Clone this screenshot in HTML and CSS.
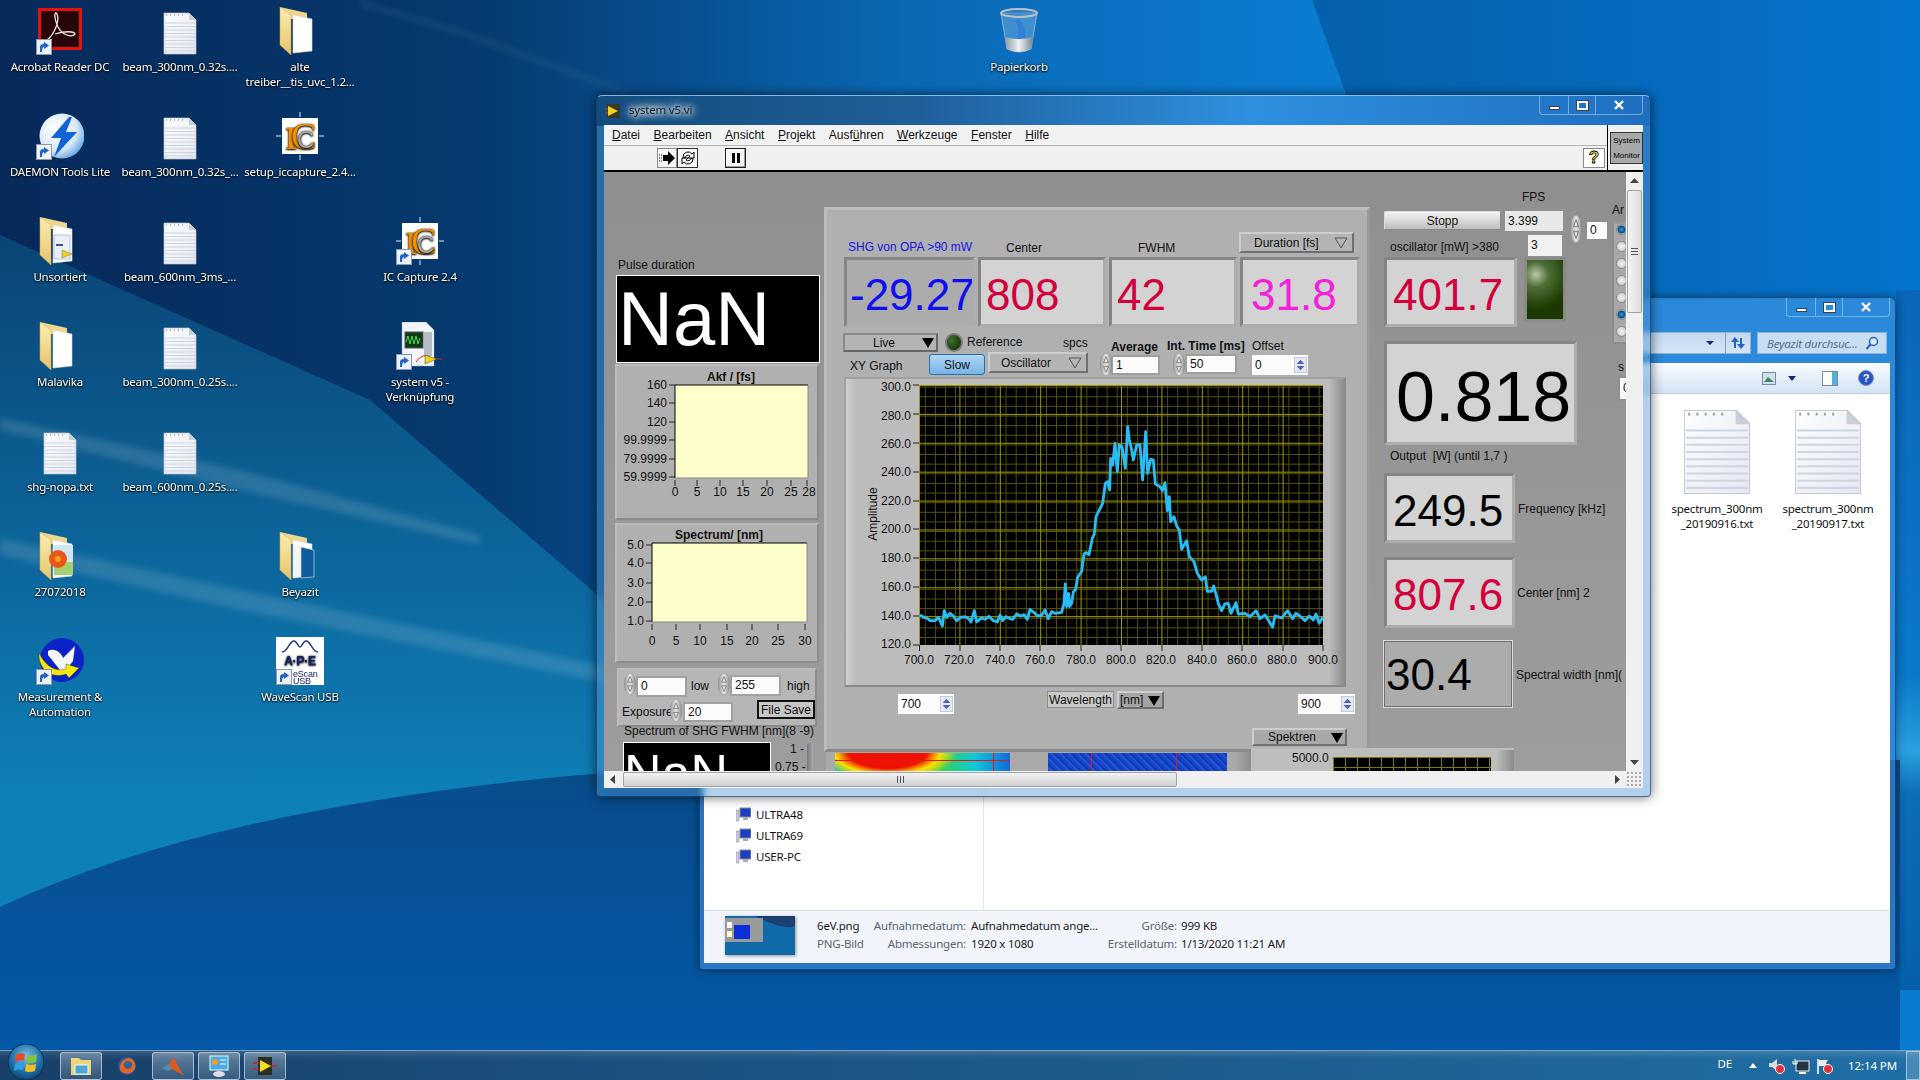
FILE: index.html
```html
<!DOCTYPE html>
<html lang="de">

<head>
    <meta charset="UTF-8">
    <title>system v5.vi</title>
    <link rel="stylesheet" href="styles.css">
</head>

<body>
    <svg class="defs" width="0" height="0">
        <defs>
            <linearGradient id="folderY" x1="0" y1="0" x2="0" y2="1">
                <stop offset="0" stop-color="#fbeeb0" />
                <stop offset="1" stop-color="#e6c46a" />
            </linearGradient>
            <linearGradient id="pageG" x1="0" y1="0" x2="1" y2="1">
                <stop offset="0" stop-color="#fdfdfe" />
                <stop offset="1" stop-color="#e4e8f0" />
            </linearGradient>
            <radialGradient id="orbG" cx=".5" cy=".35" r=".7">
                <stop offset="0" stop-color="#7fc4ea" />
                <stop offset=".6" stop-color="#1c6fa8" />
                <stop offset="1" stop-color="#0d3f6a" />
            </radialGradient>
            <radialGradient id="daemonG" cx=".35" cy=".35" r=".8">
                <stop offset="0" stop-color="#ffffff" />
                <stop offset=".6" stop-color="#d6e8f6" />
                <stop offset="1" stop-color="#3c8fe0" />
            </radialGradient>
            <linearGradient id="spinG" x1="0" y1="0" x2="1" y2="0">
                <stop offset="0" stop-color="#9a9a9a" />
                <stop offset=".5" stop-color="#e6e6e6" />
                <stop offset="1" stop-color="#8e8e8e" />
            </linearGradient>
            <linearGradient id="binG" x1="0" y1="0" x2="1" y2="0">
                <stop offset="0" stop-color="#8d9aa4" />
                <stop offset=".5" stop-color="#eef2f4" />
                <stop offset="1" stop-color="#78848c" />
            </linearGradient>
            <linearGradient id="wallTop" x1="0" y1="0" x2="1" y2="0">
                <stop offset="0" stop-color="#07295a" />
                <stop offset=".25" stop-color="#063a70" />
                <stop offset=".47" stop-color="#0a68b4" />
                <stop offset=".68" stop-color="#0b7bd0" />
                <stop offset="1" stop-color="#0b7bd0" />
            </linearGradient>
            <linearGradient id="wallRight" x1="0" y1="0" x2="1" y2="0">
                <stop offset="0" stop-color="#0560ac" />
                <stop offset="1" stop-color="#0574cc" />
            </linearGradient>
            <linearGradient id="wallMid" gradientUnits="userSpaceOnUse" x1="0" y1="235" x2="0" y2="800">
                <stop offset="0" stop-color="#0a4476" />
                <stop offset="1" stop-color="#0e80b8" />
            </linearGradient>
            <linearGradient id="wallLow" gradientUnits="userSpaceOnUse" x1="0" y1="770" x2="0" y2="1050">
                <stop offset="0" stop-color="#084c8a" />
                <stop offset="1" stop-color="#0558a8" />
            </linearGradient>
            <linearGradient id="wallEdge" x1="0" y1="0" x2="0" y2="1">
                <stop offset="0" stop-color="#0a66b8" />
                <stop offset=".55" stop-color="#0a78c8" />
                <stop offset=".66" stop-color="#2aa0e0" />
                <stop offset=".72" stop-color="#0b6cb8" />
                <stop offset="1" stop-color="#0560ac" />
            </linearGradient>
            <pattern id="gridMinor" width="10.1" height="9.63" patternUnits="userSpaceOnUse">
                <path d="M.5 0V9.63M0 .5H10.1" stroke="#57530a" fill="none" shape-rendering="crispEdges" />
            </pattern>
            <pattern id="gridMajor" width="40.4" height="28.89" patternUnits="userSpaceOnUse">
                <path d="M.5 0V28.89M0 .5H40.4" stroke="#a09c00" fill="none" shape-rendering="crispEdges" />
            </pattern>
            <symbol id="doc" viewBox="0 0 48 48">
                <path d="M8 6H33L40 13V47H8Z" fill="url(#pageG)" stroke="#b7bcc6" stroke-width=".7" />
                <path d="M33 6V13H40Z" fill="#c9ced8" />
                <path d="M10 8h1M14 8h1M18 8h1M22 8h1M26 8h1" stroke="#9aa0aa" stroke-width="1.4" />
                <path d="M9 16H39M9 19.5H39M9 23H39M9 26.5H39M9 30H39M9 33.5H39M9 37H39M9 40.5H39M9 44H39" stroke="#ccd5e2" />
            </symbol>
            <symbol id="folder" viewBox="0 0 48 48">
                <path d="M4 0L31 6V12H15Z" fill="#eed68c" />
                <path d="M17 8L36 12V44L17 46Z" fill="#fff" stroke="#d5d8de" stroke-width=".6" />
                <path d="M4 0L15 8V48L4 38Z" fill="url(#folderY)" stroke="#cfae5c" stroke-width=".5" />
            </symbol>
            <symbol id="shortcut" viewBox="0 0 16 16">
                <rect x=".5" y=".5" width="15" height="15" fill="#eef2f8" stroke="#8d99a8" />
                <path d="M4 13V8Q4 5 8 5V3L13 6.5 8 10V8Q6 8 6 13Z" fill="#1f63c4" />
            </symbol>
            <symbol id="ic" viewBox="0 0 48 48">
                <path d="M24 0V5M24 43V48M0 24H5M43 24H48" stroke="#8fb0cc" stroke-width="1.5" />
                <rect x="6" y="6" width="36" height="36" fill="#fff" />
                <text x="9" y="37" class="ic-i">I</text>
                <text x="15" y="37" class="ic-c">C</text>
                <text x="21" y="36" class="ic-c2">C</text>
            </symbol>
            <symbol id="spin" viewBox="0 0 12 24" preserveAspectRatio="none">
                <ellipse cx="6" cy="12" rx="5.8" ry="11.8" fill="url(#spinG)" stroke="#8a8a8a" stroke-width=".5" />
                <path d="M3.5 10L6 4 8.5 10ZM3.5 14L6 20 8.5 14Z" fill="none" stroke="#666" stroke-width=".7" />
            </symbol>
            <symbol id="ddopen" viewBox="0 0 14 12">
                <path d="M1 1H13L7 11Z" fill="none" stroke="#555" />
            </symbol>
        </defs>
    </svg>

    <svg class="wallpaper" viewBox="0 0 1920 1080" preserveAspectRatio="none">
        <rect width="1920" height="1080" fill="url(#wallTop)" />
        <path d="M1312 0L1420 300H1920V0Z" fill="url(#wallRight)" />
        <rect x="1896" y="290" width="24" height="700" fill="url(#wallEdge)" />
        <path d="M0 235L370 400 720 700V920H0Z" fill="url(#wallMid)" />
        <path d="M0 907Q250 790 720 765L1900 760V1080H0Z" fill="url(#wallLow)" />
        <g class="streaks">
            <polygon points="0,418 240,470 480,535 480,545 240,490 0,430" fill="#fff" opacity=".13" />
            <polygon points="0,538 240,590 480,640 720,690 720,705 240,610 0,555" fill="#fff" opacity=".13" />
            <polygon points="460,30 632,93 628,95 460,34" fill="#fff" opacity=".1" />
            <polygon points="360,0 460,28 460,36 360,6" fill="#fff" opacity=".06" />
        </g>
    </svg>

    <!-- desktop icons, filled column by column -->
    <div class="desktop">
        <div class="icon"><svg class="glyph" viewBox="0 0 48 48"><rect x="3.5" y="2.5" width="41" height="39" fill="#260606" stroke="#e8120c" stroke-width="3" /><path d="M11 33C18 28 24 14 21 7 19 3 17 9 22 20 26 28 36 31 39 27 39 24 28 24 19 27" fill="none" stroke="#f0e6e6" stroke-width="1.3" /><use href="#shortcut" x="0" y="32" width="16" height="16" /></svg><span>Acrobat Reader DC</span></div>
        <div class="icon"><svg class="glyph" viewBox="0 0 48 48"><circle cx="26" cy="24" r="22.5" fill="url(#daemonG)" /><path d="M33 5L15 26H25L18 45 41 20H30L36 5Z" fill="#1463d6" /><use href="#shortcut" x="0" y="32" width="16" height="16" /></svg><span>DAEMON Tools Lite</span></div>
        <div class="icon"><svg class="glyph" viewBox="0 0 48 48"><use href="#folder" /><rect x="18" y="18" width="16" height="24" fill="#eaf0f8" stroke="#8aa0c0" stroke-width=".6" /><path d="M20 28h7" stroke="#3a4fa0" stroke-width="2" /><path d="M26 33L36 37 26 41Z" fill="#f2d21c" stroke="#555" stroke-width=".4" /></svg><span>Unsortiert</span></div>
        <div class="icon"><svg class="glyph" viewBox="0 0 48 48"><use href="#folder" /></svg><span>Malavika</span></div>
        <div class="icon"><svg class="glyph" viewBox="0 0 48 48"><use href="#doc" /></svg><span>shg-nopa.txt</span></div>
        <div class="icon"><svg class="glyph" viewBox="0 0 48 48"><use href="#folder" /><rect x="18" y="13" width="19" height="30" fill="#a8d070" /><rect x="18" y="13" width="19" height="17" fill="#cfe6f5" /><circle cx="22" cy="27" r="9" fill="#e8561a" /><circle cx="22" cy="27" r="3" fill="#f4a020" /></svg><span>27072018</span></div>
        <div class="icon"><svg class="glyph" viewBox="0 0 48 48"><circle cx="26" cy="23" r="22" fill="#0a22c8" /><path d="M12 14C18 10 26 16 27 21L39 9 37 24 30 33H24L12 18Z" fill="#f4f6ff" /><path d="M3 16C2 34 18 42 30 37L33 41 43 31 30 27V32C20 35 10 30 3 16Z" fill="#f4e80c" stroke="#3a3a00" stroke-width=".4" /><use href="#shortcut" x="0" y="32" width="16" height="16" /></svg><span>Measurement &amp;<br>Automation</span></div>

        <div class="icon"><svg class="glyph" viewBox="0 0 48 48"><use href="#doc" /></svg><span>beam_300nm_0.32s....</span></div>
        <div class="icon"><svg class="glyph" viewBox="0 0 48 48"><use href="#doc" /></svg><span>beam_300nm_0.32s_...</span></div>
        <div class="icon"><svg class="glyph" viewBox="0 0 48 48"><use href="#doc" /></svg><span>beam_600nm_3ms_...</span></div>
        <div class="icon"><svg class="glyph" viewBox="0 0 48 48"><use href="#doc" /></svg><span>beam_300nm_0.25s....</span></div>
        <div class="icon"><svg class="glyph" viewBox="0 0 48 48"><use href="#doc" /></svg><span>beam_600nm_0.25s....</span></div>
        <div></div>
        <div></div>

        <div class="icon"><svg class="glyph" viewBox="0 0 48 48"><use href="#folder" /></svg><span>alte<br>treiber__tis_uvc_1.2...</span></div>
        <div class="icon"><svg class="glyph" viewBox="0 0 48 48"><use href="#ic" /></svg><span>setup_iccapture_2.4...</span></div>
        <div></div>
        <div></div>
        <div></div>
        <div class="icon"><svg class="glyph" viewBox="0 0 48 48"><use href="#folder" /><rect x="17" y="14" width="11" height="30" fill="#f4f4f4" /><path d="M25 15L38 18V45L25 46Z" fill="#0f5c9c" stroke="#d8e4ee" stroke-width=".6" /></svg><span>Beyazit</span></div>
        <div class="icon"><svg class="glyph" viewBox="0 0 48 48"><rect width="48" height="48" fill="#fff" /><path d="M6 15C12 15 13 4 18 4 21 4 22 10 24 10 26 10 27 4 30 4 35 4 36 15 42 15" fill="none" stroke="#1d3a7a" stroke-width="1.5" /><text x="24" y="28" class="ape">A·P·E</text><text x="17" y="40" class="ape-sub">eScan</text><text x="17" y="47" class="ape-sub">USB</text><use href="#shortcut" x="0" y="32" width="16" height="16" /></svg><span>WaveScan USB</span></div>

        <div></div>
        <div></div>
        <div class="icon"><svg class="glyph" viewBox="0 0 48 48"><use href="#ic" /><use href="#shortcut" x="0" y="32" width="16" height="16" /></svg><span>IC Capture 2.4</span></div>
        <div class="icon"><svg class="glyph" viewBox="0 0 48 48"><path d="M6 0H30L38 8V44H6Z" fill="#f2f5fa" stroke="#9ab" stroke-width=".5" /><rect x="9" y="10" width="18" height="16" fill="#0c3a1c" stroke="#555" /><path d="M10 20l2-6 2 8 2-8 2 8 2-8 2 8 2-6" fill="none" stroke="#4fdc4f" /><rect x="28" y="10" width="8" height="24" fill="#b8bcc4" /><path d="M20 40Q26 30 36 36" stroke="#d03030" fill="none" /><path d="M29 33L41 37 29 42Z" fill="#f2d21c" stroke="#444" stroke-width=".5" /><path d="M41 37h5" stroke="#d03030" /><use href="#shortcut" x="0" y="32" width="16" height="16" /></svg><span>system v5 -<br>Verknüpfung</span></div>
    </div>

    <div class="icon recycle"><svg class="glyph" viewBox="0 0 48 48"><path d="M6 6L12 42Q24 48 36 42L42 6Z" fill="#8fc4ec" fill-opacity=".4" stroke="#9fc0d8" stroke-width=".8" /><path d="M20 14Q26 22 22 32L30 32Q32 22 24 12Z" fill="#2c78d8" opacity=".7" /><path d="M10 30Q24 34 38 30L36 42Q24 48 12 42Z" fill="url(#binG)" /><ellipse cx="24" cy="6" rx="18" ry="4" fill="#3e86c6" fill-opacity=".5" stroke="#b8c0c8" stroke-width="2" /></svg><span>Papierkorb</span></div>

    <!-- explorer window behind -->
    <section class="win explorer">
        <div class="ex-title">
            <div class="wbtns">
                <div class="wb wb-min"><i></i></div>
                <div class="wb wb-max"><i></i></div>
                <div class="wb wb-close"><svg width="12" height="10" viewBox="0 0 12 10"><path d="M2 1L10 9M10 1L2 9" stroke="#fff" stroke-width="2.4" /></svg></div>
            </div>
        </div>
        <div class="ex-addr">
            <div class="addr-box">
                <svg class="addr-drop" width="10" height="6" viewBox="0 0 10 6"><path d="M1 1H9L5 5Z" fill="#12287c" /></svg>
                <div class="addr-go"><svg width="16" height="16" viewBox="0 0 16 16"><path d="M5 2L1 7H4V13H6V7H9ZM11 14L15 9H12V3H10V9H7Z" fill="#1f63c4" /></svg></div>
            </div>
            <div class="search"><span>Beyazit durchsuc...</span><svg width="14" height="14" viewBox="0 0 14 14"><circle cx="8.5" cy="5.5" r="4" fill="#d8ecfa" stroke="#1f63c4" stroke-width="1.5" /><path d="M5.5 8.5L1.5 13" stroke="#1f63c4" stroke-width="2" /></svg></div>
        </div>
        <div class="ex-tools">
            <svg width="14" height="13" viewBox="0 0 14 13"><rect x=".5" y=".5" width="13" height="12" fill="#cfe0ee" stroke="#7a8da0" /><path d="M2 10L6 5 12 10Z" fill="#3f8a5a" /></svg>
            <svg class="tools-drop" width="8" height="5" viewBox="0 0 8 5"><path d="M0 0H8L4 5Z" fill="#12287c" /></svg>
            <svg class="tools-pane" width="16" height="15" viewBox="0 0 16 15"><rect x=".5" y=".5" width="15" height="14" fill="#fff" stroke="#7a8da0" /><rect x="10" y="1" width="5" height="13" fill="#53b0d8" /></svg>
            <svg class="tools-help" width="16" height="16" viewBox="0 0 16 16"><circle cx="8" cy="8" r="7.5" fill="#2a55c8" stroke="#8094c0" /><text x="8" y="12" class="help-q">?</text></svg>
        </div>
        <div class="ex-body">
            <nav class="ex-nav">
                <div class="net"><svg width="15" height="15" viewBox="0 0 15 15"><rect x="4" y="1" width="11" height="9" fill="#1a3fc0" stroke="#889" /><rect x="7" y="10" width="5" height="3" fill="#aab" /><rect x="0" y="3" width="3" height="11" fill="#ccd" stroke="#889" stroke-width=".5" /></svg>ULTRA48</div>
                <div class="net"><svg width="15" height="15" viewBox="0 0 15 15"><rect x="4" y="1" width="11" height="9" fill="#1a3fc0" stroke="#889" /><rect x="7" y="10" width="5" height="3" fill="#aab" /><rect x="0" y="3" width="3" height="11" fill="#ccd" stroke="#889" stroke-width=".5" /></svg>ULTRA69</div>
                <div class="net"><svg width="15" height="15" viewBox="0 0 15 15"><rect x="4" y="1" width="11" height="9" fill="#1a3fc0" stroke="#889" /><rect x="7" y="10" width="5" height="3" fill="#aab" /><rect x="0" y="3" width="3" height="11" fill="#ccd" stroke="#889" stroke-width=".5" /></svg>USER-PC</div>
            </nav>
            <div class="ex-files">
                <div class="file"><svg width="66" height="84" viewBox="8 6 32 41" preserveAspectRatio="none"><use href="#doc" width="48" height="48" /></svg><span>spectrum_300nm<br>_20190916.txt</span></div>
                <div class="file"><svg width="66" height="84" viewBox="8 6 32 41" preserveAspectRatio="none"><use href="#doc" width="48" height="48" /></svg><span>spectrum_300nm<br>_20190917.txt</span></div>
            </div>
        </div>
        <div class="ex-details">
            <svg class="thumb" width="70" height="39" viewBox="0 0 70 39"><rect width="70" height="39" fill="#0e6aa8" /><path d="M30 0Q60 15 70 10V0Z" fill="#1a3f70" /><rect x="0" y="2" width="38" height="24" fill="#9a9a9a" /><rect x="9" y="9" width="16" height="14" fill="#0a30d8" /><rect x="2" y="6" width="5" height="6" fill="#fff" /><rect x="2" y="15" width="5" height="6" fill="#ffc" /></svg>
            <div class="meta">
                <span class="m-name">6eV.png</span><span class="m-key">Aufnahmedatum:</span><span class="m-val">Aufnahmedatum ange...</span><span class="m-key">Größe:</span><span class="m-val2">999 KB</span>
                <span class="m-type">PNG-Bild</span><span class="m-key">Abmessungen:</span><span class="m-val">1920 x 1080</span><span class="m-key">Erstelldatum:</span><span class="m-val2">1/13/2020 11:21 AM</span>
            </div>
        </div>
    </section>

    <!-- labview window -->
    <section class="win labview">
        <div class="lv-title">
            <svg class="vi-icon" width="16" height="16" viewBox="0 0 16 16"><rect x="2" y="1" width="13" height="14" fill="#3a3a2a" /><path d="M3 3L13 8 3 13Z" fill="#f2d21c" /><path d="M0 6h3M0 10h3" stroke="#d03030" /></svg>
            <span class="lv-name">system v5.vi</span>
            <div class="wbtns">
                <div class="wb wb-min"><i></i></div>
                <div class="wb wb-max"><i></i></div>
                <div class="wb wb-close"><svg width="12" height="10" viewBox="0 0 12 10"><path d="M2 1L10 9M10 1L2 9" stroke="#fff" stroke-width="2.4" /></svg></div>
            </div>
        </div>
        <div class="client">
            <div class="bars">
                <div class="bars-main">
                    <div class="menu">
                        <span><u>D</u>atei</span><span><u>B</u>earbeiten</span><span><u>A</u>nsicht</span><span><u>P</u>rojekt</span><span>Ausf<u>ü</u>hren</span><span><u>W</u>erkzeuge</span><span><u>F</u>enster</span><span><u>H</u>ilfe</span>
                    </div>
                    <div class="tools">
                        <div class="tbtn tbtn-run"><svg width="16" height="14" viewBox="0 0 16 14"><path d="M0 4h1M0 7h1M0 10h1M2 4h1M2 7h1M2 10h1" stroke="#000" /><path d="M4 4H9V0L16 7 9 14V10H4Z" fill="#000" /></svg></div>
                        <div class="tbtn tbtn-loop"><svg width="16" height="16" viewBox="0 0 16 16"><path d="M3 7A5 5 0 0 1 12 4L14 2V8H8L10 6A3 3 0 0 0 5 8ZM13 9A5 5 0 0 1 4 12L2 14V8H8L6 10A3 3 0 0 0 11 8Z" fill="#fff" stroke="#000" /></svg></div>
                        <div class="tbtn tbtn-pause"><i></i><i></i></div>
                        <div class="tbtn tbtn-help"><span>?</span></div>
                    </div>
                </div>
                <div class="sysmon">
                    <div class="sysmon-box"><span>System</span><span>Monitor</span></div>
                </div>
            </div>
            <div class="lv-body">
                <div class="panel">
                    <span class="lbl l-pulse">Pulse duration</span>
                    <div class="nan nan-big">NaN</div>

                    <div class="cluster c-akf">
                        <svg width="204" height="156" class="chart">
                            <text x="116" y="17" class="ax ax-b" text-anchor="middle">Akf / [fs]</text>
                            <rect x="60" y="21" width="133" height="93" fill="#ffffcc" />
                            <path d="M60 114V21H193" fill="none" stroke="#000" />
                            <path d="M193 21V114H60" fill="none" stroke="#888" />
                            <path d="M54 21h6M54 39h6M54 58h6M54 76h6M54 95h6M54 113h6M60 116v6M82 116v6M105 116v6M128 116v6M152 116v6M176 116v6M192 116v6" stroke="#222" />
                            <g text-anchor="end" class="ax">
                                <text x="52" y="25">160</text>
                                <text x="52" y="43">140</text>
                                <text x="52" y="62">120</text>
                                <text x="52" y="80">99.9999</text>
                                <text x="52" y="99">79.9999</text>
                                <text x="52" y="117">59.9999</text>
                            </g>
                            <g text-anchor="middle" class="ax">
                                <text x="60" y="132">0</text>
                                <text x="82" y="132">5</text>
                                <text x="105" y="132">10</text>
                                <text x="128" y="132">15</text>
                                <text x="152" y="132">20</text>
                                <text x="176" y="132">25</text>
                                <text x="194" y="132">28</text>
                            </g>
                        </svg>
                    </div>

                    <div class="cluster c-spec">
                        <svg width="204" height="140" class="chart">
                            <text x="104" y="16" class="ax ax-b" text-anchor="middle">Spectrum/ [nm]</text>
                            <rect x="37" y="20" width="155" height="79" fill="#ffffcc" />
                            <path d="M37 99V20H192" fill="none" stroke="#000" />
                            <path d="M192 20V99H37" fill="none" stroke="#888" />
                            <path d="M31 22h6M31 40h6M31 60h6M31 79h6M31 98h6M37 101v6M61 101v6M85 101v6M112 101v6M137 101v6M163 101v6M190 101v6" stroke="#222" />
                            <g text-anchor="end" class="ax">
                                <text x="29" y="26">5.0</text>
                                <text x="29" y="44">4.0</text>
                                <text x="29" y="64">3.0</text>
                                <text x="29" y="83">2.0</text>
                                <text x="29" y="102">1.0</text>
                            </g>
                            <g text-anchor="middle" class="ax">
                                <text x="37" y="122">0</text>
                                <text x="61" y="122">5</text>
                                <text x="85" y="122">10</text>
                                <text x="112" y="122">15</text>
                                <text x="137" y="122">20</text>
                                <text x="163" y="122">25</text>
                                <text x="190" y="122">30</text>
                            </g>
                        </svg>
                    </div>

                    <div class="cluster c-ctrl"></div>
                    <svg class="spin sp-low"><use href="#spin" /></svg>
                    <div class="field f-low">0</div>
                    <span class="lbl l-low">low</span>
                    <svg class="spin sp-high"><use href="#spin" /></svg>
                    <div class="field f-high">255</div>
                    <span class="lbl l-high">high</span>
                    <span class="lbl l-exp">Exposure</span>
                    <svg class="spin sp-exp"><use href="#spin" /></svg>
                    <div class="field f-exp">20</div>
                    <div class="btn b-save">File Save</div>

                    <span class="lbl l-shg">Spectrum of SHG FWHM [nm](8 -9)</span>
                    <div class="nan nan-small">NaN</div>
                    <span class="lbl l-scale1">1 -</span>
                    <span class="lbl l-scale2">0.75 -</span>
                    <div class="slider"></div>

                    <!-- big cluster in the middle -->
                    <div class="map-frame"></div>
                    <div class="map map-rainbow"></div>
                    <div class="map map-blue"></div>
                    <div class="cluster c-main"></div>

                    <span class="lbl l-opa">SHG von OPA &gt;90 mW</span>
                    <span class="lbl l-center">Center</span>
                    <span class="lbl l-fwhm">FWHM</span>
                    <div class="dd dd-duration">Duration [fs]<svg class="dd-open"><use href="#ddopen" /></svg></div>

                    <div class="ind i-opa">-29.27</div>
                    <div class="ind i-center">808</div>
                    <div class="ind i-fwhm">42</div>
                    <div class="ind i-dur">31.8</div>

                    <div class="dd dd-live">Live<i class="dd-solid"></i></div>
                    <div class="led"></div>
                    <span class="lbl l-ref">Reference</span>
                    <span class="lbl l-spcs">spcs</span>
                    <span class="lbl l-avg">Average</span>
                    <span class="lbl l-int">Int. Time [ms]</span>
                    <span class="lbl l-off">Offset</span>

                    <span class="lbl l-xy">XY Graph</span>
                    <div class="btn-slow">Slow</div>
                    <div class="dd dd-osc">Oscillator<svg class="dd-open"><use href="#ddopen" /></svg></div>
                    <svg class="spin sp-avg"><use href="#spin" /></svg>
                    <div class="field f-avg">1</div>
                    <svg class="spin sp-int"><use href="#spin" /></svg>
                    <div class="field f-int">50</div>
                    <div class="num n-off">0<div class="updown"><i class="up"></i><i class="down"></i></div></div>

                    <div class="cluster c-graph">
                        <svg width="502" height="310" class="chart">
                            <rect x="75" y="8" width="404" height="260" fill="#000" />
                            <rect x="75" y="8" width="404" height="260" fill="url(#gridMinor)" />
                            <g transform="translate(75 8)">
                                <rect width="404" height="260" fill="url(#gridMajor)" />
                            </g>
                            <path d="M69 8h6M69 37h6M69 66h6M69 95h6M69 124h6M69 152h6M69 181h6M69 210h6M69 239h6M69 268h6" stroke="#222" />
                            <path d="M75.5 268v6M116 268v6M156 268v6M196 268v6M237 268v6M277 268v6M318 268v6M358 268v6M398 268v6M439 268v6M479 268v6" stroke="#222" />
                            <g text-anchor="end" class="ax">
                                <text x="67" y="14">300.0</text>
                                <text x="67" y="43">280.0</text>
                                <text x="67" y="71">260.0</text>
                                <text x="67" y="99">240.0</text>
                                <text x="67" y="128">220.0</text>
                                <text x="67" y="156">200.0</text>
                                <text x="67" y="185">180.0</text>
                                <text x="67" y="214">160.0</text>
                                <text x="67" y="243">140.0</text>
                                <text x="67" y="271">120.0</text>
                            </g>
                            <g text-anchor="middle" class="ax">
                                <text x="75" y="287">700.0</text>
                                <text x="115" y="287">720.0</text>
                                <text x="156" y="287">740.0</text>
                                <text x="196" y="287">760.0</text>
                                <text x="237" y="287">780.0</text>
                                <text x="277" y="287">800.0</text>
                                <text x="317" y="287">820.0</text>
                                <text x="358" y="287">840.0</text>
                                <text x="398" y="287">860.0</text>
                                <text x="438" y="287">880.0</text>
                                <text x="479" y="287">900.0</text>
                            </g>
                            <text class="ax" text-anchor="middle" transform="translate(33 137) rotate(-90)">Amplitude</text>
                            <polyline transform="translate(76 3) scale(.3333)" fill="none" stroke="#28bdf6" stroke-width="8.5" stroke-linejoin="round" points="0,705 12,712 22,715 30,722 45,722 55,712 60,722 67,738 73,692 80,712 90,700 100,708 110,722 122,712 135,710 148,718 153,726 163,692 170,726 185,714 195,718 207,709 220,722 232,726 240,705 248,722 258,710 268,715 278,718 290,702 302,708 312,704 322,718 330,688 345,700 352,708 365,706 375,690 385,716 395,695 405,700 425,697 432,670 436,612 440,680 446,640 449,680 455,670 460,636 467,628 473,592 485,574 492,522 498,518 507,524 517,475 523,462 528,410 548,370 556,310 563,305 569,330 572,235 578,255 585,190 592,275 598,195 606,200 616,265 623,140 628,180 634,205 640,240 650,195 660,195 668,300 677,155 683,280 692,238 700,240 706,312 720,320 727,332 735,308 742,392 748,350 752,425 762,410 770,438 778,450 785,508 800,482 808,530 822,545 832,580 845,600 856,590 862,634 875,634 881,618 890,650 895,670 905,692 915,672 925,670 933,700 948,668 955,702 975,700 990,710 1008,692 1020,716 1035,705 1045,720 1058,742 1065,708 1085,714 1103,692 1118,716 1128,700 1140,708 1155,722 1168,708 1180,720 1188,702 1198,730 1209,712" />
                        </svg>
                    </div>

                    <div class="num n-min">700<div class="updown"><i class="up"></i><i class="down"></i></div></div>
                    <div class="btn b-wave">Wavelength</div>
                    <div class="dd dd-nm">[nm]<i class="dd-solid"></i></div>
                    <div class="num n-max">900<div class="updown"><i class="up"></i><i class="down"></i></div></div>
                    <div class="dd dd-spek">Spektren<i class="dd-solid"></i></div>

                    <div class="cluster c-low">
                        <span class="lbl l-5000">5000.0 -</span>
                        <div class="mini-plot"></div>
                    </div>

                    <!-- right column -->
                    <span class="lbl l-fps">FPS</span>
                    <div class="btn b-stop">Stopp</div>
                    <div class="field f-fps">3.399</div>
                    <span class="lbl l-osc">oscillator [mW] &gt;380</span>
                    <div class="field f-three">3</div>
                    <div class="ind i-osc">401.7</div>
                    <div class="led-big"></div>
                    <svg class="spin sp-ar"><use href="#spin" /></svg>
                    <div class="field f-ar">0</div>
                    <span class="lbl l-ar">Ar</span>
                    <div class="radios">
                        <i class="radio on"></i><i class="radio"></i><i class="radio"></i><i class="radio"></i><i class="radio"></i><i class="radio on"></i><i class="radio"></i>
                    </div>
                    <div class="ind i-out">0.818</div>
                    <span class="lbl l-out">Output&nbsp; [W] (until 1,7 )</span>
                    <div class="ind i-freq">249.5</div>
                    <span class="lbl l-freq">Frequency [kHz]</span>
                    <div class="ind i-cen2">807.6</div>
                    <span class="lbl l-cen2">Center [nm] 2</span>
                    <div class="ind i-width">30.4</div>
                    <span class="lbl l-width">Spectral width [nm](</span>
                    <span class="lbl l-s">s</span>
                    <div class="field f-s">0</div>
                </div>
                <div class="vscroll">
                    <div class="sb-arrow"><svg width="9" height="5" viewBox="0 0 9 5"><path d="M4.5 0L9 5H0Z" fill="#444" /></svg></div>
                    <div class="vthumb"><i></i><i></i><i></i></div>
                    <div class="sb-fill"></div>
                    <div class="sb-arrow"><svg width="9" height="5" viewBox="0 0 9 5"><path d="M4.5 5L9 0H0Z" fill="#444" /></svg></div>
                </div>
            </div>
            <div class="hscroll">
                <div class="sb-arrow-h"><svg width="5" height="9" viewBox="0 0 5 9"><path d="M0 4.5L5 0V9Z" fill="#444" /></svg></div>
                <div class="hthumb"><i></i><i></i><i></i></div>
                <div class="sb-fill"></div>
                <div class="sb-arrow-h"><svg width="5" height="9" viewBox="0 0 5 9"><path d="M5 4.5L0 0V9Z" fill="#444" /></svg></div>
                <div class="corner"></div>
            </div>
        </div>
    </section>

    <footer class="taskbar">
        <div class="orb"><svg width="36" height="36" viewBox="0 0 36 36"><circle cx="18" cy="18" r="18" fill="url(#orbG)" stroke="#0c2f50" /><path d="M8 11Q12 8 17 10L16 17Q12 15 7 18Z" fill="#e8492a" /><path d="M19 11Q24 13 29 10L28 18Q23 20 18 18Z" fill="#86c440" /><path d="M7 20Q12 17 16 19L15 26Q10 24 6 27Z" fill="#2f9ee8" /><path d="M18 20Q23 22 28 20L27 27Q21 29 17 27Z" fill="#f4c020" /></svg></div>
        <div class="task"><svg width="24" height="22" viewBox="0 0 24 22"><path d="M2 3H10L12 5H22V20H2Z" fill="#f0d27a" /><rect x="6" y="10" width="13" height="9" fill="#4fa4d8" stroke="#dff" /></svg></div>
        <div class="task task-plain"><svg width="20" height="20" viewBox="0 0 20 20"><circle cx="10" cy="10" r="9" fill="#2a5aa8" /><path d="M3 14C2 7 7 2 12 2 17 3 19 8 18 12 16 18 8 20 3 14Z" fill="#e8651c" /><circle cx="11" cy="9" r="4" fill="#34619e" /></svg></div>
        <div class="task"><svg width="24" height="22" viewBox="0 0 24 22"><path d="M1 13L8 9 13 2 18 13 23 20 16 17 12 14 7 16Z" fill="#d95a1c" /><path d="M1 13L8 9 10 13 7 16Z" fill="#3f8fc8" /></svg></div>
        <div class="task"><svg width="24" height="22" viewBox="0 0 24 22"><rect x="3" y="1" width="18" height="14" fill="#4fa8e8" stroke="#dff" /><circle cx="8" cy="7" r="3" fill="#f0a020" /><path d="M13 5h6M13 9h6" stroke="#fff" /><ellipse cx="12" cy="19" rx="6" ry="3" fill="#dde" /></svg></div>
        <div class="task"><svg width="24" height="22" viewBox="0 0 24 22"><rect x="5" y="2" width="14" height="18" fill="#2c2c20" /><path d="M7 5L18 11 7 17Z" fill="#f2e21c" /><path d="M0 8H6M0 14H6M18 11h6" stroke="#d02020" stroke-width="1.4" /></svg></div>
        <div class="tray">
            <span class="lang">DE</span>
            <svg class="tray-arrow" width="8" height="5" viewBox="0 0 8 5"><path d="M4 0L8 5H0Z" fill="#fff" /></svg>
            <svg width="18" height="16" viewBox="0 0 18 16"><path d="M1 5H4L9 1V13L4 9H1Z" fill="#ddd" /><circle cx="12" cy="11" r="4.5" fill="#e0303a" stroke="#fff" /></svg>
            <svg width="18" height="16" viewBox="0 0 18 16"><rect x="4" y="3" width="13" height="10" fill="#234" stroke="#eee" /><path d="M3 1V6M1 3V6H5V3" stroke="#fff" fill="none" /><path d="M7 15H14" stroke="#fff" stroke-width="2" /></svg>
            <svg width="18" height="16" viewBox="0 0 18 16"><path d="M2 1V16" stroke="#fff" stroke-width="1.6" /><path d="M3 2H12L10 5 12 8H3Z" fill="#eee" /><circle cx="12" cy="11" r="4.5" fill="#e0303a" stroke="#fff" /></svg>
            <span class="clock">12:14 PM</span>
            <div class="show-desk"></div>
        </div>
    </footer>
</body>

</html>
```

FILE: styles.css
```css
* {
    box-sizing: border-box;
}

body {
    margin: 0;
    width: 1920px;
    height: 1080px;
    overflow: hidden;
    position: relative;
    font-family: 'Liberation Sans', Arial, sans-serif;
    font-size: 12px;
    background: #0558a8;
}

.defs {
    position: absolute;
}

.wallpaper {
    position: absolute;
    left: 0;
    top: 0;
    width: 1920px;
    height: 1080px;
}

.streaks {
    filter: blur(3px);
}

/* desktop */
.desktop {
    position: absolute;
    left: 0;
    top: 0;
    display: grid;
    grid-auto-flow: column;
    grid-template-rows: repeat(7, 105px);
    grid-auto-columns: 120px;
}

.icon {
    display: flex;
    flex-direction: column;
    align-items: center;
    padding-top: 7px;
    font-family: 'Noto Sans', sans-serif;
    font-size: 11.5px;
    letter-spacing: -.2px;
    line-height: 15px;
    color: #fff;
    text-align: center;
    text-shadow: 0 1px 2px #000, 0 0 2px #000;
    white-space: nowrap;
}

.icon span {
    margin-top: 4px;
}

.glyph {
    width: 48px;
    height: 48px;
}

.recycle {
    position: absolute;
    left: 959px;
    top: 0;
    width: 120px;
}

.ic-i {
    font: bold 32px 'Liberation Serif', serif;
    fill: #f09000;
}

.ic-c {
    font: 38px 'Liberation Serif', serif;
    fill: #f09000;
}

.ic-c2 {
    font: 24px 'Liberation Sans', sans-serif;
    fill: #a8a8a8;
}

.ape {
    font: bold 12px 'Liberation Sans', sans-serif;
    fill: #14236e;
    text-anchor: middle;
}

.ape-sub {
    font: 9px 'Liberation Sans', sans-serif;
    fill: #14236e;
    text-shadow: none;
}

/* window frames */
.win {
    position: absolute;
    border-radius: 6px 6px 4px 4px;
    border: 1px solid rgba(10, 30, 60, .55);
}

.wbtns {
    display: flex;
    width: 104px;
    height: 19px;
    margin-left: auto;
    border: 1px solid rgba(220, 235, 250, .45);
    border-top: 0;
    border-radius: 0 0 4px 4px;
}

.wb {
    display: flex;
    align-items: center;
    justify-content: center;
    border-right: 1px solid rgba(220, 235, 250, .45);
}

.wb:last-child {
    border-right: 0;
}

.wb-min {
    width: 29px;
}

.wb-min i {
    width: 11px;
    height: 4px;
    margin-top: 5px;
    background: #fff;
    border: 1px solid #345;
}

.wb-max {
    width: 27px;
}

.wb-max i {
    width: 11px;
    height: 9px;
    border: 2px solid #fff;
    outline: 1px solid #345;
}

.wb-close {
    flex: 1;
}

/* explorer */
.explorer {
    left: 699px;
    top: 297px;
    width: 1197px;
    height: 673px;
    padding: 0 5px 6px 4px;
    display: flex;
    flex-direction: column;
    background: rgba(70, 150, 225, .55);
    box-shadow: 0 0 10px rgba(0, 0, 0, .45);
}

.ex-title {
    height: 34px;
    display: flex;
    align-items: flex-start;
}

.ex-addr {
    height: 22px;
    display: flex;
    gap: 6px;
    padding-right: 3px;
    margin-bottom: 9px;
}

.addr-box {
    flex: 1;
    display: flex;
    justify-content: flex-end;
    align-items: center;
    background: linear-gradient(#c2d8ef, #d6e5f5);
    border: 1px solid #8fb2d5;
}

.addr-drop {
    margin-right: 10px;
}

.addr-go {
    width: 25px;
    height: 100%;
    display: flex;
    align-items: center;
    justify-content: center;
    border-left: 1px solid #7d9cc0;
}

.search {
    width: 130px;
    display: flex;
    align-items: center;
    justify-content: space-between;
    padding: 0 7px 0 9px;
    background: #c8ddf2;
    border: 1px solid #8fb2d5;
    font-family: 'Noto Sans', sans-serif;
    font-style: italic;
    color: #5a6f88;
    font-size: 11.5px;
    letter-spacing: -.2px;
    white-space: nowrap;
}

.ex-tools {
    height: 31px;
    display: flex;
    align-items: center;
    justify-content: flex-end;
    padding-right: 16px;
    background: linear-gradient(#fbfdff, #e4eef9 55%, #d4e3f3);
    border-bottom: 1px solid #b9cde3;
}

.tools-drop {
    margin-left: 12px;
}

.tools-pane {
    margin-left: 26px;
}

.tools-help {
    margin-left: 20px;
}

.help-q {
    font: bold 11px 'Liberation Sans', sans-serif;
    fill: #fff;
    text-anchor: middle;
}

.ex-body {
    flex: 1;
    display: flex;
    background: #fff;
    font-family: 'Noto Sans', sans-serif;
    font-size: 11.5px;
    letter-spacing: -.2px;
    color: #111;
}

.ex-nav {
    width: 280px;
    padding: 410px 0 0 32px;
    border-right: 1px solid #dce7f3;
}

.net {
    display: flex;
    align-items: center;
    gap: 5px;
    height: 21px;
}

.ex-files {
    flex: 1;
    display: flex;
    justify-content: flex-end;
    gap: 1px;
    padding: 16px 7px 0 0;
}

.file {
    width: 110px;
    display: flex;
    flex-direction: column;
    align-items: center;
    text-align: center;
    line-height: 15px;
    white-space: nowrap;
}

.file span {
    margin-top: 7px;
}

.ex-details {
    height: 53px;
    display: flex;
    background: #f1f5fb;
    border-top: 1px solid #d3e0ef;
    font-family: 'Noto Sans', sans-serif;
    font-size: 11.5px;
    letter-spacing: -.2px;
    color: #222;
}

.thumb {
    margin: 5px 0 0 21px;
    box-shadow: 1px 1px 3px rgba(0, 0, 0, .4);
}

.meta {
    margin: 6px 0 0 22px;
    display: grid;
    grid-template-columns: 55px 94px 135px 76px auto;
    grid-auto-rows: 18px;
    line-height: 18px;
    white-space: nowrap;
}

.m-type {
    color: #5a6472;
}

.m-key {
    color: #5a6472;
    text-align: right;
}

.m-val {
    padding-left: 5px;
}

.m-val2 {
    padding-left: 4px;
}

/* labview window */
.labview {
    left: 596px;
    top: 95px;
    width: 1055px;
    height: 702px;
    padding: 0 7px 8px 7px;
    display: flex;
    flex-direction: column;
    background:
        linear-gradient(90deg, #134c7e 0, #1f5f9a 30%, #2f90e0 62%, #1f6fc0 100%) top / 100% 30px no-repeat,
        rgba(80, 150, 215, .45);
    border-top-color: rgba(200, 230, 255, .6);
    backdrop-filter: blur(3px);
    box-shadow: 0 0 12px rgba(0, 0, 0, .6);
}

.lv-title {
    height: 29px;
    display: flex;
    align-items: flex-start;
    color: #101820;
    font-family: 'Noto Sans', sans-serif;
    font-size: 11.5px;
    letter-spacing: -.2px;
}

.vi-icon {
    margin: 7px 5px 0 1px;
}

.lv-name {
    margin-top: 6px;
    padding: 0 3px;
    text-shadow: 0 0 4px #fff, 0 0 8px #fff, 0 0 10px rgba(255, 255, 255, .9), 0 0 12px rgba(255, 255, 255, .7);
}

.client {
    height: 663px;
    display: flex;
    flex-direction: column;
    background: #f0f0f0;
}

.bars {
    height: 47px;
    display: flex;
    background: #f0f0f0;
    border-bottom: 2px solid #000;
}

.bars-main {
    flex: 1;
}

.menu {
    height: 21px;
    display: flex;
    align-items: center;
    gap: 13.5px;
    padding-left: 8px;
    background: #f2f2f2;
    border-bottom: 1px solid #b5b5b5;
    color: #111;
}

.tools {
    height: 24px;
    display: flex;
    align-items: center;
    padding-left: 53px;
}

.tbtn {
    height: 20px;
    display: flex;
    align-items: center;
    justify-content: center;
    border: 1px solid #8a8a8a;
    background: #f6f6f6;
}

.tbtn-run {
    width: 20px;
}

.tbtn-loop {
    width: 21px;
    border-color: #333;
}

.tbtn-pause {
    width: 21px;
    margin-left: 27px;
    gap: 2px;
    border-color: #222;
    box-shadow: inset -1px -1px 0 #999;
}

.tbtn-pause i {
    width: 3px;
    height: 10px;
    background: #000;
}

.tbtn-help {
    width: 22px;
    margin-left: auto;
    margin-right: 2px;
    background: #fff;
    font: bold 17px 'Liberation Sans', sans-serif;
    color: #f0e040;
    -webkit-text-stroke: .8px #000;
}

.sysmon {
    width: 36px;
    padding: 7px 0 0 2px;
    border-left: 1px solid #000;
}

.sysmon-box {
    width: 33px;
    height: 32px;
    display: flex;
    flex-direction: column;
    align-items: center;
    justify-content: space-around;
    overflow: hidden;
    background: #a8a8a8;
    border: 1px solid #333;
    font-size: 8px;
    white-space: nowrap;
}

.lv-body {
    flex: 1;
    display: flex;
    min-height: 0;
}

/* front panel: controls sit where the VI author dropped them */
.panel {
    position: relative;
    flex: 1;
    overflow: hidden;
    background: linear-gradient(#8f8f8f, #9d9d9d);
}

.lbl {
    position: absolute;
    line-height: 14px;
    color: #111;
    white-space: nowrap;
}

.l-pulse { left: 14px; top: 86px; }
.l-low { left: 87px; top: 507px; }
.l-high { left: 183px; top: 507px; }
.l-exp { left: 18px; top: 533px; }
.l-shg { left: 20px; top: 552px; }
.l-scale1 { left: 186px; top: 570px; }
.l-scale2 { left: 171px; top: 588px; }
.l-opa { left: 244px; top: 68px; color: #1414e6; }
.l-center { left: 402px; top: 69px; }
.l-fwhm { left: 534px; top: 69px; }
.l-ref { left: 363px; top: 163px; }
.l-spcs { left: 459px; top: 164px; }
.l-avg { left: 507px; top: 168px; font-weight: bold; }
.l-int { left: 563px; top: 167px; font-weight: bold; }
.l-off { left: 648px; top: 167px; }
.l-xy { left: 246px; top: 187px; }
.l-fps { left: 918px; top: 18px; }
.l-osc { left: 786px; top: 68px; }
.l-ar { left: 1008px; top: 31px; }
.l-out { left: 786px; top: 277px; }
.l-freq { left: 914px; top: 330px; }
.l-cen2 { left: 913px; top: 414px; }
.l-width { left: 912px; top: 496px; }
.l-s { left: 1014px; top: 188px; }
.l-5000 { left: 39px; top: 1px; }

.nan {
    position: absolute;
    background: #000;
    color: #fff;
    overflow: hidden;
}

.nan-big {
    left: 12px;
    top: 103px;
    width: 204px;
    height: 88px;
    padding-left: 1px;
    border: 1px solid #fff;
    font-size: 76px;
    line-height: 86px;
}

.nan-small {
    left: 19px;
    top: 570px;
    width: 148px;
    height: 70px;
    border: 1px solid #fff;
    font-size: 52px;
    line-height: 60px;
}

.cluster {
    position: absolute;
    background: #b0b0b0;
    border: 2px solid;
    border-color: #bdbdbd #8b8b8b #8b8b8b #bdbdbd;
}

.chart {
    position: absolute;
    left: -2px;
    top: -2px;
}

.ax {
    font: 12px 'Liberation Sans', sans-serif;
    fill: #111;
}

.ax-b {
    font-weight: bold;
}

.c-akf { left: 11px; top: 192px; width: 204px; height: 156px; }
.c-spec { left: 11px; top: 351px; width: 204px; height: 140px; }
.c-ctrl { left: 13px; top: 496px; width: 200px; height: 59px; background: #b6b6b6; }
.c-main {
    left: 220px;
    top: 35px;
    width: 546px;
    height: 545px;
    background: #b0b0b0;
    border-width: 3px;
    border-color: #bcbcbc #9a9a9a #8b8b8b #bcbcbc;
}

.c-graph {
    left: 240px;
    top: 205px;
    width: 502px;
    height: 310px;
    background: linear-gradient(90deg, #cfcfcf 0, #bcbcbc 2%, #bcbcbc 97%, #8c8c8c 100%);
    border-color: #a0a0a0 #8b8b8b #888 #a0a0a0;
}

.c-low {
    left: 647px;
    top: 576px;
    width: 263px;
    height: 40px;
    background: linear-gradient(90deg, #bdbdbd 0, #bdbdbd 93%, #8c8c8c 100%);
    border-bottom: 0;
    border-right: 0;
}

.mini-plot {
    position: absolute;
    left: 80px;
    top: 7px;
    width: 158px;
    height: 20px;
    background:
        repeating-linear-gradient(90deg, #7d7b00 0 1px, transparent 1px 12px),
        repeating-linear-gradient(0deg, transparent 0 9px, #7d7b00 9px 10px),
        #000;
}

.spin {
    position: absolute;
    width: 12px;
}

.sp-low { left: 20px; top: 501px; height: 22px; }
.sp-high { left: 114px; top: 501px; height: 22px; }
.sp-exp { left: 66px; top: 527px; height: 23px; }
.sp-avg { left: 496px; top: 181px; height: 23px; }
.sp-int { left: 569px; top: 181px; height: 23px; }
.sp-ar { left: 966px; top: 43px; height: 28px; }

.field {
    position: absolute;
    padding-left: 3px;
    background: #fbfbfb;
    line-height: 17px;
    color: #111;
    outline: 2px solid rgba(140, 140, 140, .5);
    overflow: hidden;
}

.f-low { left: 34px; top: 506px; width: 47px; height: 17px; }
.f-high { left: 128px; top: 505px; width: 47px; height: 17px; }
.f-exp { left: 81px; top: 532px; width: 46px; height: 16px; }
.f-avg { left: 509px; top: 185px; width: 45px; height: 16px; }
.f-int { left: 583px; top: 184px; width: 48px; height: 16px; }
.f-fps { left: 901px; top: 39px; width: 58px; height: 20px; line-height: 20px; outline: 0; background: #e8e8e8; }
.f-three { left: 924px; top: 63px; width: 34px; height: 21px; line-height: 21px; outline: 0; background: #f2f2f2; }
.f-ar { left: 983px; top: 50px; width: 20px; height: 17px; }
.f-s { left: 1016px; top: 206px; width: 20px; height: 21px; line-height: 21px; }

.btn {
    position: absolute;
    display: flex;
    align-items: center;
    justify-content: center;
    border: 1px solid #777;
    background: linear-gradient(#e4e4e4, #bfbfbf);
    color: #111;
    white-space: nowrap;
}

.b-save {
    left: 153px;
    top: 528px;
    width: 58px;
    height: 19px;
    border: 2px solid #111;
    background: #c6c6c6;
}

.b-wave {
    left: 443px;
    top: 519px;
    width: 67px;
    height: 17px;
    background: #c8c8c8;
    border-color: #8b8b8b;
}

.b-stop {
    left: 780px;
    top: 39px;
    width: 117px;
    height: 19px;
    border-color: #dcdcdc #888 #888 #dcdcdc;
    background: linear-gradient(#f4f4f4, #bebebe);
    border-radius: 2px;
}

.btn-slow {
    position: absolute;
    left: 325px;
    top: 182px;
    width: 56px;
    height: 21px;
    display: flex;
    align-items: center;
    justify-content: center;
    background: linear-gradient(#b0d8f6, #78b2e4);
    border: 1px solid #2c6ea8;
    border-radius: 3px;
    color: #111;
}

.dd {
    position: absolute;
    display: flex;
    align-items: center;
    background: #b4b4b4;
    border: 2px solid;
    border-color: #cdcdcd #6f6f6f #6f6f6f #cdcdcd;
    color: #111;
    white-space: nowrap;
}

.dd-open {
    position: absolute;
    top: 3px;
    right: 4px;
    width: 14px;
    height: 12px;
}

.dd-solid {
    position: absolute;
    right: 2px;
    top: 3px;
    border: 6.5px solid transparent;
    border-top: 10px solid #000;
    border-bottom: 0;
}

.dd-duration { left: 635px; top: 60px; width: 115px; height: 21px; padding-left: 13px; }
.dd-live { left: 239px; top: 161px; width: 95px; height: 19px; padding-left: 28px; border-color: #8a8a8a #666 #666 #8a8a8a; }
.dd-osc { left: 384px; top: 180px; width: 100px; height: 21px; padding-left: 11px; }
.dd-nm { left: 513px; top: 519px; width: 47px; height: 18px; padding-left: 1px; background: #a4a4a4; }
.dd-spek { left: 648px; top: 556px; width: 95px; height: 18px; padding-left: 14px; background: #a8a8a8; }

.ind {
    position: absolute;
    overflow: hidden;
    background: #d3d3d3;
    border: 3px solid;
    border-color: #858585 #acacac #acacac #858585;
    font-size: 44px;
    line-height: 70px;
    white-space: nowrap;
    color: #d4003c;
}

.i-opa { left: 240px; top: 85px; width: 131px; height: 70px; padding-left: 3px; background: #acacac; color: #1010ee; }
.i-center { left: 374px; top: 85px; width: 128px; height: 70px; padding-left: 5px; }
.i-fwhm { left: 505px; top: 85px; width: 128px; height: 70px; padding-left: 5px; }
.i-dur { left: 636px; top: 85px; width: 120px; height: 70px; padding-left: 8px; color: #f420dc; }
.i-osc { left: 780px; top: 85px; width: 133px; height: 70px; padding-left: 6px; }
.i-out { left: 780px; top: 169px; width: 193px; height: 104px; padding-left: 9px; font-size: 70px; line-height: 107px; color: #000; }
.i-freq { left: 780px; top: 301px; width: 131px; height: 70px; padding-left: 6px; color: #000; }
.i-cen2 { left: 780px; top: 385px; width: 131px; height: 71px; padding-left: 6px; }
.i-width {
    left: 779px;
    top: 468px;
    width: 130px;
    height: 68px;
    padding-left: 2px;
    background: #acacac;
    border: 1px solid #dadada;
    box-shadow: inset 0 0 0 1px #6e6e6e;
    color: #000;
    line-height: 68px;
}

.led {
    position: absolute;
    left: 341px;
    top: 161px;
    width: 18px;
    height: 19px;
    border-radius: 50%;
    border: 2px solid #7a7a7a;
    background: radial-gradient(circle at 35% 35%, #3f7030, #1a3c08 70%);
}

.led-big {
    position: absolute;
    left: 920px;
    top: 85px;
    width: 42px;
    height: 65px;
    border: 3px solid #8a8a8a;
    background: radial-gradient(circle at 25% 25%, #bcc8ac 0, #4e6f36 24%, #1a3800 68%);
}

.num {
    position: absolute;
    padding: 0 0 0 3px;
    background: #fbfbfb;
    line-height: 20px;
    color: #111;
}

.n-off { left: 648px; top: 183px; width: 56px; height: 20px; }
.n-min { left: 294px; top: 522px; width: 56px; height: 20px; }
.n-max { left: 694px; top: 522px; width: 57px; height: 20px; }

.updown {
    position: absolute;
    right: 1px;
    top: 2px;
    width: 13px;
    height: 16px;
    display: flex;
    flex-direction: column;
    justify-content: space-between;
    align-items: center;
    background: #e4e9f2;
    border: 1px solid #c4ccd8;
}

.updown i {
    width: 11px;
    height: 7px;
    display: block;
    background: #5660b0;
}

.up {
    clip-path: polygon(50% 25%, 85% 85%, 15% 85%);
}

.down {
    clip-path: polygon(15% 15%, 85% 15%, 50% 75%);
}

.map-frame {
    position: absolute;
    left: 222px;
    top: 575px;
    width: 425px;
    height: 24px;
    background: linear-gradient(90deg, #aaa 0 96%, #8c8c8c 100%);
}

.map {
    position: absolute;
    top: 581px;
    height: 18px;
}

.map-rainbow {
    left: 231px;
    width: 175px;
    background:
        linear-gradient(#e01818, #e01818) 0 7px / 100% 1px no-repeat,
        linear-gradient(#e01818, #e01818) 158px 0 / 1px 100% no-repeat,
        radial-gradient(ellipse 70px 28px at 30% 0, #f01000 0 55%, #f8e000 75%, rgba(248, 224, 0, 0) 100%),
        linear-gradient(90deg, #18b8d8 0, #10d060 8%, #f0e000 14%, #f0d000 45%, #30d060 62%, #10c8d8 80%, #1068e0 100%);
}

.map-blue {
    left: 444px;
    width: 179px;
    background:
        linear-gradient(#e01818, #e01818) 43px 0 / 1px 100% no-repeat,
        linear-gradient(#e01818, #e01818) 128px 0 / 1px 100% no-repeat,
        repeating-linear-gradient(45deg, #1844c8 0 2px, #1a56d8 2px 4px, #1438b8 4px 6px);
}

.slider {
    position: absolute;
    left: 203px;
    top: 571px;
    width: 6px;
    height: 28px;
    background: linear-gradient(90deg, #777, #a8a8b8);
    border-radius: 3px 3px 0 0;
}

.radios {
    position: absolute;
    left: 1008px;
    top: 50px;
    width: 30px;
    height: 122px;
    padding: 0 0 0 2px;
    display: flex;
    flex-direction: column;
    gap: 6px;
    background: #a8a8a8;
    border: 2px solid #8c8c8c;
    border-top-color: #999;
}

.radio {
    width: 11px;
    height: 11px;
    border-radius: 50%;
    flex: none;
    background: radial-gradient(circle, #f2f2f2, #c4c4c4);
    border: 1px solid #8a8a8a;
}

.radio.on {
    background: radial-gradient(circle at 50% 50%, #2d98d8, #0d4f80 55%, #d8d8d8 75%);
}

/* scrollbars */
.vscroll {
    width: 17px;
    display: flex;
    flex-direction: column;
    background: #f0f0f0;
}

.sb-arrow {
    height: 17px;
    display: flex;
    align-items: center;
    justify-content: center;
}

.sb-fill {
    flex: 1;
}

.vthumb {
    height: 123px;
    margin: 1px 1px 0;
    display: flex;
    flex-direction: column;
    align-items: center;
    justify-content: center;
    gap: 2px;
    background: linear-gradient(90deg, #f4f4f4, #dcdcdc);
    border: 1px solid #a4a4a4;
    border-radius: 2px;
}

.vthumb i {
    width: 7px;
    height: 1px;
    background: #555;
}

.hscroll {
    height: 17px;
    display: flex;
    background: #f0f0f0;
}

.sb-arrow-h {
    width: 17px;
    display: flex;
    align-items: center;
    justify-content: center;
}

.hthumb {
    width: 554px;
    margin: 1px 0 1px 2px;
    display: flex;
    align-items: center;
    justify-content: center;
    gap: 2px;
    background: linear-gradient(#f2f2f2, #cfcfcf);
    border: 1px solid #a4a4a4;
    border-radius: 2px;
}

.hthumb i {
    width: 1px;
    height: 7px;
    background: #555;
}

.corner {
    width: 17px;
    background: radial-gradient(#aaa 1px, transparent 1.5px) 0 0 / 4px 4px;
}

/* taskbar */
.taskbar {
    position: absolute;
    left: 0;
    bottom: 0;
    width: 1920px;
    height: 30px;
    display: flex;
    align-items: center;
    gap: 4px;
    background: linear-gradient(90deg, #173f68 0, #1c4f7d 30%, #1d5f92 70%, #1f6fa6 100%);
    border-top: 1px solid #7ba0c0;
    box-shadow: inset 0 10px 10px -8px rgba(255, 255, 255, .22);
}

.orb {
    width: 46px;
    height: 36px;
    margin: -7px 2px 0 8px;
}

.task {
    width: 42px;
    height: 28px;
    display: flex;
    align-items: center;
    justify-content: center;
    background: linear-gradient(rgba(255, 255, 255, .32), rgba(255, 255, 255, .12));
    border: 1px solid rgba(230, 240, 250, .6);
    border-radius: 3px;
}

.task-plain {
    background: none;
    border-color: transparent;
}

.tray {
    margin-left: auto;
    display: flex;
    align-items: center;
    gap: 6px;
    height: 100%;
    color: #fff;
    font-family: 'Noto Sans', sans-serif;
    font-size: 11.5px;
    letter-spacing: -.1px;
}

.lang {
    margin-top: -4px;
    margin-right: 11px;
}

.tray-arrow {
    margin-right: 5px;
}

.clock {
    margin-left: 8px;
    margin-right: 3px;
}

.show-desk {
    width: 14px;
    height: 100%;
    background: rgba(255, 255, 255, .18);
    border: 1px solid rgba(230, 240, 250, .55);
}
```
